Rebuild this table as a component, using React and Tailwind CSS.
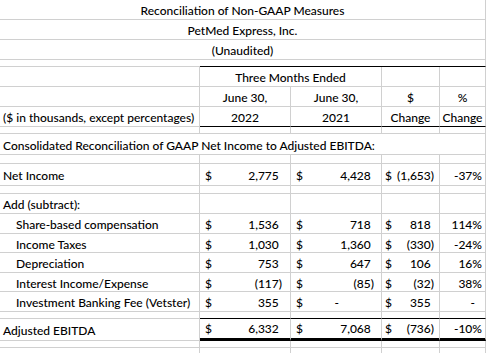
import React from "react";

const G = "border-solid border-[#d0d0d0]";

const items = [
  { label: "Share-based compensation", b: "1,536", c: "718", d: "818", e: "114%" },
  { label: "Income Taxes", b: "1,030", c: "1,360", d: "(330)", e: "-24%" },
  { label: "Depreciation", b: "753", c: "647", d: "106", e: "16%" },
  { label: "Interest Income/Expense", b: "(117)", c: "(85)", d: "(32)", e: "38%" },
  { label: "Investment Banking Fee (Vetster)", b: "355", c: "-", d: "355", e: "-" },
];

// accounting style: "$" on the left, figure on the right, room for ")" kept on positives
const Money = ({ value, pad = "pr-[8px]", dashPad = "pr-[42px]" }) => {
  if (value === "-") {
    return (
      <>
        <span>$</span>
        <span className={dashPad}>-</span>
      </>
    );
  }
  const neg = value.startsWith("(");
  return (
    <>
      <span>$</span>
      <span className={pad}>
        {value}
        {!neg && <span className="invisible">)</span>}
      </span>
    </>
  );
};

const Blank = ({ h }) => (
  <div className={`flex ${h}`}>
    <div className={`w-[200px] shrink-0 border-r border-b ${G}`} />
    <div className={`w-[91px] shrink-0 border-r border-b ${G}`} />
    <div className={`w-[91px] shrink-0 border-r border-b ${G}`} />
    <div className={`w-[58px] shrink-0 border-r border-b ${G}`} />
    <div className={`w-[46px] shrink-0 border-r border-b ${G}`} />
  </div>
);

const Line = ({ label, indent, b, c, d, e, h = "h-[20px]" }) => (
  <div className={`flex ${h}`}>
    <div
      className={`flex w-[200px] shrink-0 items-center border-r border-b ${G} pt-[3px] ${
        indent ? "pl-[16px]" : "pl-[3px]"
      }`}
    >
      {label}
    </div>
    <div className={`flex w-[91px] shrink-0 items-center justify-between border-r border-b ${G} pt-[3px] pl-[5px]`}>
      <Money value={b} pad="pr-[8px]" />
    </div>
    <div className={`flex w-[91px] shrink-0 items-center justify-between border-r border-b ${G} pt-[3px] pl-[5px]`}>
      <Money value={c} pad="pr-[7px]" />
    </div>
    <div className={`flex w-[58px] shrink-0 items-center justify-between border-r border-b ${G} pt-[3px] pl-[3px]`}>
      <Money value={d} pad="pr-[5px]" />
    </div>
    <div
      className={`flex w-[46px] shrink-0 items-center justify-end border-r border-b ${G} pt-[3px] ${
        e === "-" ? "pr-[10px]" : "pr-[3px]"
      }`}
    >
      {e}
    </div>
  </div>
);

export default function App() {
  return (
    <div
      className="w-[488px] h-[353px] overflow-hidden whitespace-nowrap bg-white text-[12px] font-medium leading-none text-black"
      style={{ fontFamily: "Lato, 'Liberation Sans', sans-serif" }}
    >
      {/* title block */}
      <div className={`flex h-[20px] w-[486px] items-center justify-center border-r border-b ${G} pt-[2px]`}>
        Reconciliation of Non-GAAP Measures
      </div>
      <div className={`flex h-[20px] w-[486px] items-center justify-center border-r border-b ${G} pt-[2px]`}>
        PetMed Express, Inc.
      </div>
      <div className={`flex h-[20px] w-[486px] items-center justify-center border-r border-b ${G} pt-[2px]`}>
        (Unaudited)
      </div>
      <div className="flex h-[7px]">
        <div className={`w-[200px] shrink-0 border-b ${G}`} />
        <div className="w-[286px] shrink-0 border-r border-b border-solid border-r-[#d0d0d0] border-b-black" />
      </div>

      {/* column headings */}
      <div className="flex h-[20px]">
        <div className={`w-[200px] shrink-0 border-r border-b ${G}`} />
        <div className={`flex w-[182px] shrink-0 items-center justify-center border-r border-b ${G} pt-[3px]`}>
          Three Months Ended
        </div>
        <div className={`w-[58px] shrink-0 border-r border-b ${G}`} />
        <div className={`w-[46px] shrink-0 border-r border-b ${G}`} />
      </div>
      <div className="flex h-[20px]">
        <div className={`w-[200px] shrink-0 border-r border-b ${G}`} />
        <div className={`flex w-[91px] shrink-0 items-center justify-center border-r border-b ${G} pt-[3px]`}>June 30,</div>
        <div className={`flex w-[91px] shrink-0 items-center justify-center border-r border-b ${G} pt-[3px]`}>June 30,</div>
        <div className={`flex w-[58px] shrink-0 items-center justify-center border-r border-b ${G} pt-[3px]`}>$</div>
        <div className={`flex w-[46px] shrink-0 items-center justify-center border-r border-b ${G} pt-[3px]`}>%</div>
      </div>
      <div className="flex h-[20px]">
        <div className={`flex w-[200px] shrink-0 items-center border-r border-b ${G} pt-[3px] pl-[3px]`}>
          ($ in thousands, except percentages)
        </div>
        <div className="flex w-[91px] shrink-0 items-center justify-center border-r border-b border-solid border-r-[#d0d0d0] border-b-black pt-[3px]">
          2022
        </div>
        <div className="flex w-[91px] shrink-0 items-center justify-center border-r border-b border-solid border-r-[#d0d0d0] border-b-black pt-[3px]">
          2021
        </div>
        <div className="flex w-[58px] shrink-0 items-center justify-center border-r border-b border-solid border-r-[#d0d0d0] border-b-black pt-[3px]">
          Change
        </div>
        <div className="flex w-[46px] shrink-0 items-center justify-center border-r border-b border-solid border-r-[#d0d0d0] border-b-black pt-[3px]">
          Change
        </div>
      </div>
      <Blank h="h-[7px]" />

      <div className={`flex h-[21px] w-[486px] items-center border-r border-b ${G} pt-[3px] pl-[3px]`}>
        Consolidated Reconciliation of GAAP Net Income to Adjusted EBITDA:
      </div>
      <Blank h="h-[9px]" />

      <Line label="Net Income" b="2,775" c="4,428" d="(1,653)" e="-37%" h="h-[22px]" />
      <Blank h="h-[8px]" />

      <div className="flex h-[20px]">
        <div className={`flex w-[200px] shrink-0 items-center border-r border-b ${G} pt-[3px] pl-[3px]`}>
          Add (subtract):
        </div>
        <div className={`w-[91px] shrink-0 border-r border-b ${G}`} />
        <div className={`w-[91px] shrink-0 border-r border-b ${G}`} />
        <div className={`w-[58px] shrink-0 border-r border-b ${G}`} />
        <div className={`w-[46px] shrink-0 border-r border-b ${G}`} />
      </div>

      {items.map((it, i) => (
        <Line key={it.label} indent {...it} h={i % 2 ? "h-[19px]" : "h-[20px]"} />
      ))}

      {/* total */}
      <div className="flex h-[7px]">
        <div className={`w-[200px] shrink-0 border-r border-b ${G}`} />
        <div className="w-[91px] shrink-0 border-r border-b border-solid border-r-[#d0d0d0] border-b-black" />
        <div className="w-[91px] shrink-0 border-r border-b border-solid border-r-[#d0d0d0] border-b-black" />
        <div className="w-[58px] shrink-0 border-r border-b border-solid border-r-[#d0d0d0] border-b-black" />
        <div className="w-[46px] shrink-0 border-r border-b border-solid border-r-[#d0d0d0] border-b-black" />
      </div>
      <div className="flex h-[22px]">
        <div className={`flex w-[200px] shrink-0 items-center border-r border-b ${G} pt-[2px] pl-[3px]`}>
          Adjusted EBITDA
        </div>
        <div className="flex w-[91px] shrink-0 items-center justify-between border-r border-b-[3px] border-solid border-r-[#d0d0d0] border-b-black pt-[1px] pl-[5px]">
          <Money value="6,332" pad="pr-[8px]" />
        </div>
        <div className="flex w-[91px] shrink-0 items-center justify-between border-r border-b-[3px] border-solid border-r-[#d0d0d0] border-b-black pt-[1px] pl-[5px]">
          <Money value="7,068" pad="pr-[7px]" />
        </div>
        <div className="flex w-[58px] shrink-0 items-center justify-between border-r border-b-[3px] border-solid border-r-[#d0d0d0] border-b-black pt-[1px] pl-[3px]">
          <Money value="(736)" pad="pr-[5px]" />
        </div>
        <div className="flex w-[46px] shrink-0 items-center justify-end border-r border-b-[3px] border-solid border-r-[#d0d0d0] border-b-black pt-[1px] pr-[3px]">
          -10%
        </div>
      </div>
      <Blank h="h-[7px]" />
      <Blank h="h-[10px]" />
    </div>
  );
}
